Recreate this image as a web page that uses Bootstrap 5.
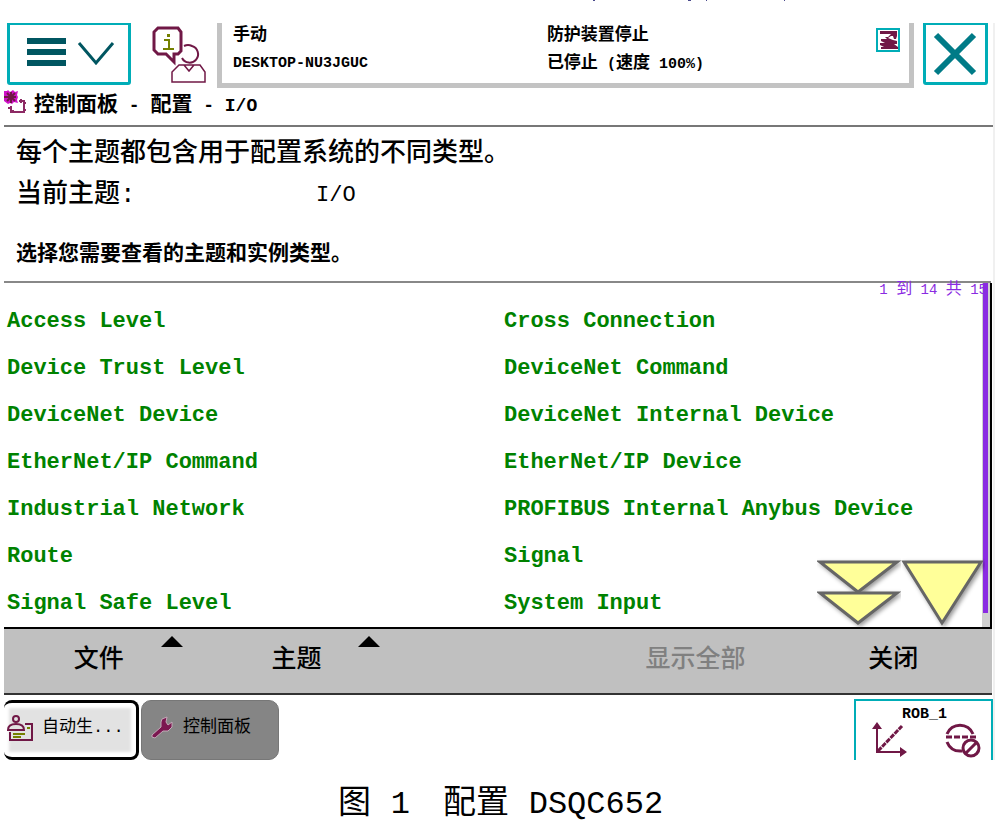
<!DOCTYPE html>
<html lang="zh-CN">
<head>
<meta charset="utf-8">
<meta name="viewport" content="width=device-width, initial-scale=1">
<title>配置 DSQC652</title>
<link rel="stylesheet" href="https://cdn.jsdelivr.net/npm/bootstrap@5.3.0/dist/css/bootstrap.min.css">
<style>
  body { font-family: "Liberation Mono", "Noto Sans CJK SC", monospace; color: #000; background: #fff; }
  button { font-family: inherit; color: #000; }
  .pendant { margin: 23px 6px 0 4px; border-right: 2px solid #f0f0f0; }
  .teal-frame { border: 3px solid #00adb7; border-top-width: 2px; background: #fff; padding: 0; border-radius: 0 0 3px 3px; }
  .menu-btn { width: 124px; height: 62px; margin-left: 3px; }
  .close-btn { width: 65px; height: 62px; margin-right: 5px; }
  .op-btn { width: 86px; padding: 0; border: 0; background: none; }
  .status-box { border: 5px solid #c3c3c3; border-top: 0; height: 65px; font-size: 15px; line-height: 32px; margin-right: 9px; }
  .status-left { width: 47%; padding-left: 11px; }
  .status-mid { padding-left: 2px; }
  .zh17 { font-size: 17px; }
  .crumb { height: 39px; font-size: 18px; line-height: 36px; border-bottom: 2px solid #777; }
  .zh21 { font-size: 21px; }
  .intro { height: 156px; padding: 7px 12px 0; border-bottom: 2px solid #888; font-size: 26px; line-height: 41px; font-weight: 500; margin-right: 2px; }
  .topic-name { font-size: 22px; }
  .topic-label { width: 300px; }
  .hint { font-size: 21px; line-height: 30px; margin-top: 24px; }
  .types { height: 346px; border-right: 2px solid #000; border-bottom: 2px solid #000; margin-right: 1px; }
  .type-grid { display: grid; grid-template-columns: 497px 1fr; grid-auto-rows: 47px; padding: 15px 0 0 3px; }
  .type-grid a { color: #008200; font-size: 22px; line-height: 47px; font-weight: 700; text-decoration: none; white-space: nowrap; }
  .track { width: 8px; background: #d0d0d0; padding: 0 2px 0 1px; }
  .thumb { height: 330px; background: #8a2be2; }
  .range-info { top: -3px; right: 3px; z-index: 1; font-size: 14px; line-height: 20px; color: #8a2be2; white-space: nowrap; }
  .range-info .zh16 { font-size: 16px; }
  .pager { right: 5px; bottom: 0; }
  .pager button { border: 0; padding: 0; background: none; line-height: 0; }
  .pager g { filter: drop-shadow(2px 2px 2px #0006); fill: #ffff99; stroke: #666; stroke-width: 3; }
  .cmdbar { display: grid; grid-template-columns: repeat(5, 1fr); height: 66px; background: #c0c0c0; border-bottom: 2px solid #333; margin-right: 1px; }
  .cmdbar button { border: 0; background: none; font-size: 25px; line-height: 58px; padding: 0; font-weight: 500; }
  .cmdbar .has-caret { padding-right: 8px; }
  .cmdbar button:disabled { color: #808080; }
  .caret { right: 19px; top: 7px; }
  .taskbar { height: 65px; padding-top: 5px; }
  .task { height: 60px; font-size: 17px; border-radius: 10px; text-align: left; }
  .task-prod { width: 135px; border: 3px solid #000; border-left: 0; background: #e2e2e2; box-shadow: inset 0 0 3px 5px #fff; padding: 0 0 5px 3px; border-radius: 8px; }
  .task-panel { width: 138px; border: 1px solid #777; background: #858585; margin-left: 2px; padding: 0 0 4px 9px; }
  .task-label { margin-left: 9px; }
  .rob { width: 139px; height: 61px; border: 2px solid #00adb7; border-bottom: 0; background: #fff; padding: 0; margin-top: -1px; }
  .rob-name { font-size: 15px; line-height: 20px; top: 4px; left: 46px; }
  .caption { font-size: 33px; line-height: 40px; padding-top: 25px; }
  .caption-latin { font-size: 32px; }
  .cut-line { left: 590px; top: 0; }
</style>
</head>
<body>
<svg class="position-absolute cut-line" width="210" height="2" fill="#4a4a8c" aria-hidden="true"><path d="M3 0h2v1h-2zM98 0h3v1h-3zM116 0h1v1h-1zM194 0h1v1h-1z"/></svg>
<main class="pendant">
  <header class="d-flex">
    <button class="teal-frame menu-btn" aria-label="菜单">
      <svg width="118" height="57" viewBox="0 0 118 57"><path d="M17 16h39M17 27h39M17 38h39" stroke="#005661" stroke-width="6"/><path d="M69 18 86 38 103 18" fill="none" stroke="#005661" stroke-width="3"/></svg>
    </button>
    <button class="op-btn" aria-label="操作员">
      <svg width="86" height="64" viewBox="131 23 86 64" fill="none" stroke="#701846">
        <path d="M158 27h20l3 4v19l-3 3h-4v8l-8-8h-8l-4-4V31z" stroke-width="3"/>
        <path d="M184 45q4-2 8 0a8.500 8.500 0 1 1-10 12" stroke-width="2"/>
        <path d="M179 64h21l5 7v10h-33V71zM184 64l5 6 5-6" stroke-width="1.500"/>
        <path d="M164 39h5v9M163 48h11" stroke="#748000" stroke-width="2"/><path d="M167 33h3v3h-3z" fill="#748000" stroke="none"/>
      </svg>
    </button>
    <section class="status-box d-flex flex-grow-1 fw-bold">
      <div class="status-left"><div class="zh17 lh-1 pt-1 pb-1">手动</div><div>DESKTOP-NU3JGUC</div></div>
      <div class="status-mid flex-grow-1"><div class="zh17 lh-1 pt-1 pb-1">防护装置停止</div><div><span class="zh17">已停止</span> (<span class="zh17">速度</span> 100%)</div></div>
      <svg class="mt-1 me-2" width="26" height="26" viewBox="0 0 26 26"><path d="M2 2h22v22H2z" fill="#fff" stroke="#00adb7" stroke-width="2"/><path d="M5 4h17v5l-1 3h-2l-1-3h-2l-3 2 5 2 4 1v3h-3l4 3v2H6v-2h3l-4-2v-2h5l-4-2v-2h6l-2-2h3l3-3H5z" fill="#701846"/></svg>
    </section>
    <button class="teal-frame close-btn" aria-label="关闭窗口"><svg width="59" height="57" viewBox="0 0 59 57"><path d="M10 10 48 48M48 10 10 48" stroke="#007b87" stroke-width="6"/></svg></button>
  </header>

  <h1 class="crumb fw-bold m-0 d-flex">
    <svg width="30" height="32" viewBox="0 0 30 32"><path d="M0 3h3l1-1 2 2 3-2 2 2 3-1-1 4 1 2-1 3 1 3-4-1-2 2-2-1-2 1-4-3z" fill="#d010c8"/><path d="M0 9h12M7 4v11M3 5l8 8M11 5l-8 8" stroke="#701846" stroke-width="2"/><path d="M7 18v6h13V13h-5M4 20h3M17 11v4M22 15h-3M22 22h-3M9 22v3" fill="none" stroke="#8d2a64" stroke-width="2"/></svg>
    <span><span class="zh21">控制面板</span> - <span class="zh21">配置</span> - I/O</span>
  </h1>

  <section class="intro">
    <div class="text-nowrap">每个主题都包含用于配置系统的不同类型。</div>
    <div class="d-flex"><span class="topic-label">当前主题:</span><span class="topic-name">I/O</span></div>
    <div class="hint fw-bold">选择您需要查看的主题和实例类型。</div>
  </section>

  <section class="types d-flex position-relative">
    <nav class="type-grid flex-grow-1" aria-label="类型">
      <a href="#">Access Level</a><a href="#">Cross Connection</a>
      <a href="#">Device Trust Level</a><a href="#">DeviceNet Command</a>
      <a href="#">DeviceNet Device</a><a href="#">DeviceNet Internal Device</a>
      <a href="#">EtherNet/IP Command</a><a href="#">EtherNet/IP Device</a>
      <a href="#">Industrial Network</a><a href="#">PROFIBUS Internal Anybus Device</a>
      <a href="#">Route</a><a href="#">Signal</a>
      <a href="#">Signal Safe Level</a><a href="#">System Input</a>
    </nav>
    <div class="range-info position-absolute">1 <span class="zh16">到</span> 14 <span class="zh16">共</span> 15</div>
    <div class="track"><div class="thumb"></div></div>
    <div class="pager position-absolute d-flex">
      <button aria-label="下一页"><svg width="84" height="70" viewBox="0 0 84 70"><g><path d="M3 5h77L41 35z"/><path d="M3 36h77L41 66z"/></g></svg></button>
      <button aria-label="下一行"><svg width="84" height="70" viewBox="0 0 84 70"><g><path d="M3 5h77L41 66z"/></g></svg></button>
    </div>
  </section>

  <div class="cmdbar">
    <button class="has-caret position-relative">文件<svg class="caret position-absolute" width="22" height="11"><path d="M0 11 11 0l11 11z"/></svg></button>
    <button class="has-caret position-relative">主题<svg class="caret position-absolute" width="22" height="11"><path d="M0 11 11 0l11 11z"/></svg></button>
    <span></span>
    <button disabled>显示全部</button>
    <button>关闭</button>
  </div>

  <footer class="taskbar d-flex">
    <button class="task task-prod d-flex align-items-center">
      <svg width="26" height="28" viewBox="0 0 26 28" fill="none" stroke="#701846" stroke-width="2"><circle cx="9" cy="5" r="3"/><path d="M1 16q0-6 8-6t8 6zM3 18v8h22V10h-7"/><path d="M6 20h12M6 23h8M20 14h3" stroke="#748000"/></svg>
      <span class="task-label">自动生...</span>
    </button>
    <button class="task task-panel d-flex align-items-center">
      <svg width="23" height="24" viewBox="0 0 23 24"><path d="m11 3 5-2-1 5 2 3 4-3v5l-4 4h-5l-8 7-3-1v-2l9-8V6z" fill="#7b1750" stroke="#c3a9b8"/></svg>
      <span class="task-label">控制面板</span>
    </button>
    <button class="rob ms-auto position-relative" aria-label="ROB_1">
      <span class="rob-name fw-bold position-absolute">ROB_1</span>
      <svg class="d-block" width="135" height="59" viewBox="0 1 135 59" fill="none" stroke="#701846" stroke-width="2"><path d="M21 27v25h24"/><path d="m16 29 5-7 5 7zM44 47l7 5-7 5z" fill="#701846" stroke="none"/><path d="M22 51 46 26" stroke-width="3" stroke-dasharray="5 1"/><path d="M91 34a14 14 0 0 1 26 0M91 42q4 10 15 9" stroke-width="3"/><path d="M90 37h30" stroke-width="3" stroke-dasharray="6 2"/><circle cx="115" cy="48" r="8" fill="#fff" stroke-width="3"/><path d="m109 54 12-12" stroke-width="3"/></svg>
    </button>
  </footer>
</main>
<div class="caption text-center">图 <span class="caption-latin">1</span>　配置 <span class="caption-latin">DSQC652</span></div>
<script src="https://cdn.jsdelivr.net/npm/bootstrap@5.3.0/dist/js/bootstrap.bundle.min.js"></script>
</body>
</html>
